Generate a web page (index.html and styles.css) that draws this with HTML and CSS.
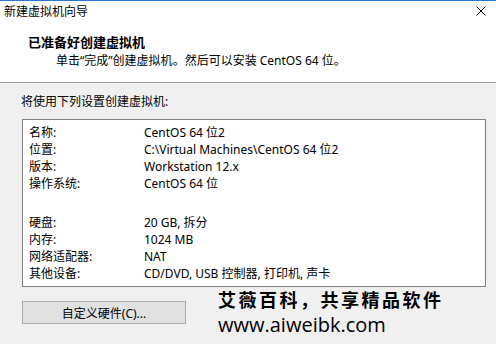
FILE: index.html
```html
<!DOCTYPE html>
<html lang="zh-CN">
<head>
<meta charset="utf-8">
<title>新建虚拟机向导</title>
<link rel="stylesheet" href="styles.css">
</head>
<body>
<div class="window">
  <header class="top">
    <div class="titlebar">
      <span class="title">新建虚拟机向导</span>
      <svg class="close" width="10" height="10" viewBox="0 0 10 10" aria-label="关闭"><path d="M0.5 0.5 L9.5 9.5 M9.5 0.5 L0.5 9.5" stroke="#000" stroke-width="1" fill="none"/></svg>
    </div>
    <div class="intro">
      <h1>已准备好创建虚拟机</h1>
      <p>单击“完成”创建虚拟机<span class="punct">。</span>然后可以安装 CentOS 64 位<span class="punct">。</span></p>
    </div>
  </header>
  <main class="content">
    <p class="lead">将使用下列设置创建虚拟机:</p>
    <div class="summary">
      <dl class="group">
        <dt>名称:</dt><dd>CentOS 64 位2</dd>
        <dt>位置:</dt><dd>C:\Virtual Machines\CentOS 64 位2</dd>
        <dt>版本:</dt><dd>Workstation 12.x</dd>
        <dt>操作系统:</dt><dd>CentOS 64 位</dd>
      </dl>
      <dl class="group">
        <dt>硬盘:</dt><dd>20 GB, 拆分</dd>
        <dt>内存:</dt><dd>1024 MB</dd>
        <dt>网络适配器:</dt><dd>NAT</dd>
        <dt>其他设备:</dt><dd>CD/DVD, USB 控制器, 打印机, 声卡</dd>
      </dl>
    </div>
    <button class="btn" type="button">自定义硬件(C)...</button>
  </main>
  <div class="watermark">
    <div class="wm-cn">艾薇百科，共享精品软件</div>
    <div class="wm-url">www.aiweibk.com</div>
  </div>
</div>
</body>
</html>
```

FILE: styles.css
```css
* { box-sizing: border-box; }
html, body { margin: 0; padding: 0; }
body {
  width: 496px;
  height: 344px;
  overflow: hidden;
  background: #f0f0f0;
  font-family: "Noto Sans", "Noto Sans CJK SC", sans-serif;
  font-size: 12px;
  color: #000;
}
.window {
  position: relative;
  width: 496px;
  height: 344px;
}
.top {
  background: #fff;
  border-top: 1px solid #2b78d0;
  border-bottom: 1px solid #a0a0a0;
  height: 83px;
}
.titlebar {
  display: flex;
  align-items: center;
  justify-content: space-between;
  height: 22px;
  padding: 0 10px 0 4px;
  line-height: 22px;
}
.close { display: block; margin-top: -3px; }
.intro { padding: 10px 0 0 28px; }
.intro h1 {
  margin: 0;
  font-size: 13px;
  font-weight: bold;
  line-height: 18px;
}
.intro p {
  margin: 0;
  padding-left: 28px;
  line-height: 17px;
}
.punct { font-family: "Noto Sans CJK TC", sans-serif; }
.content {
  padding: 10px 10px 0 21px;
  display: flex;
  flex-direction: column;
  align-items: flex-start;
}
.lead { margin: 0; line-height: 17px; }
.summary {
  margin: 9px 0 0 1px;
  width: 464px;
  background: #fff;
  border: 1px solid #828282;
  padding: 4px 6px 4px 6px;
  display: flex;
  flex-direction: column;
  gap: 22px;
}
.group {
  margin: 0;
  display: grid;
  grid-template-columns: 115px 1fr;
  line-height: 17px;
}
.group dt, .group dd { margin: 0; white-space: nowrap; }
.btn {
  margin: 14px 0 0 1px;
  width: 164px;
  height: 23px;
  background: #e1e1e1;
  border: 1px solid #adadad;
  font: inherit;
  color: #000;
  padding: 0;
}
.watermark {
  position: absolute;
  left: 218px;
  top: 287px;
  color: #000;
}
.wm-cn {
  font-family: "Noto Sans CJK SC", sans-serif;
  font-size: 18px;
  font-weight: bold;
  letter-spacing: 2.5px;
  line-height: 24px;
}
.wm-url {
  font-family: "Open Sans", sans-serif;
  font-size: 20px;
  line-height: 28px;
}
```
